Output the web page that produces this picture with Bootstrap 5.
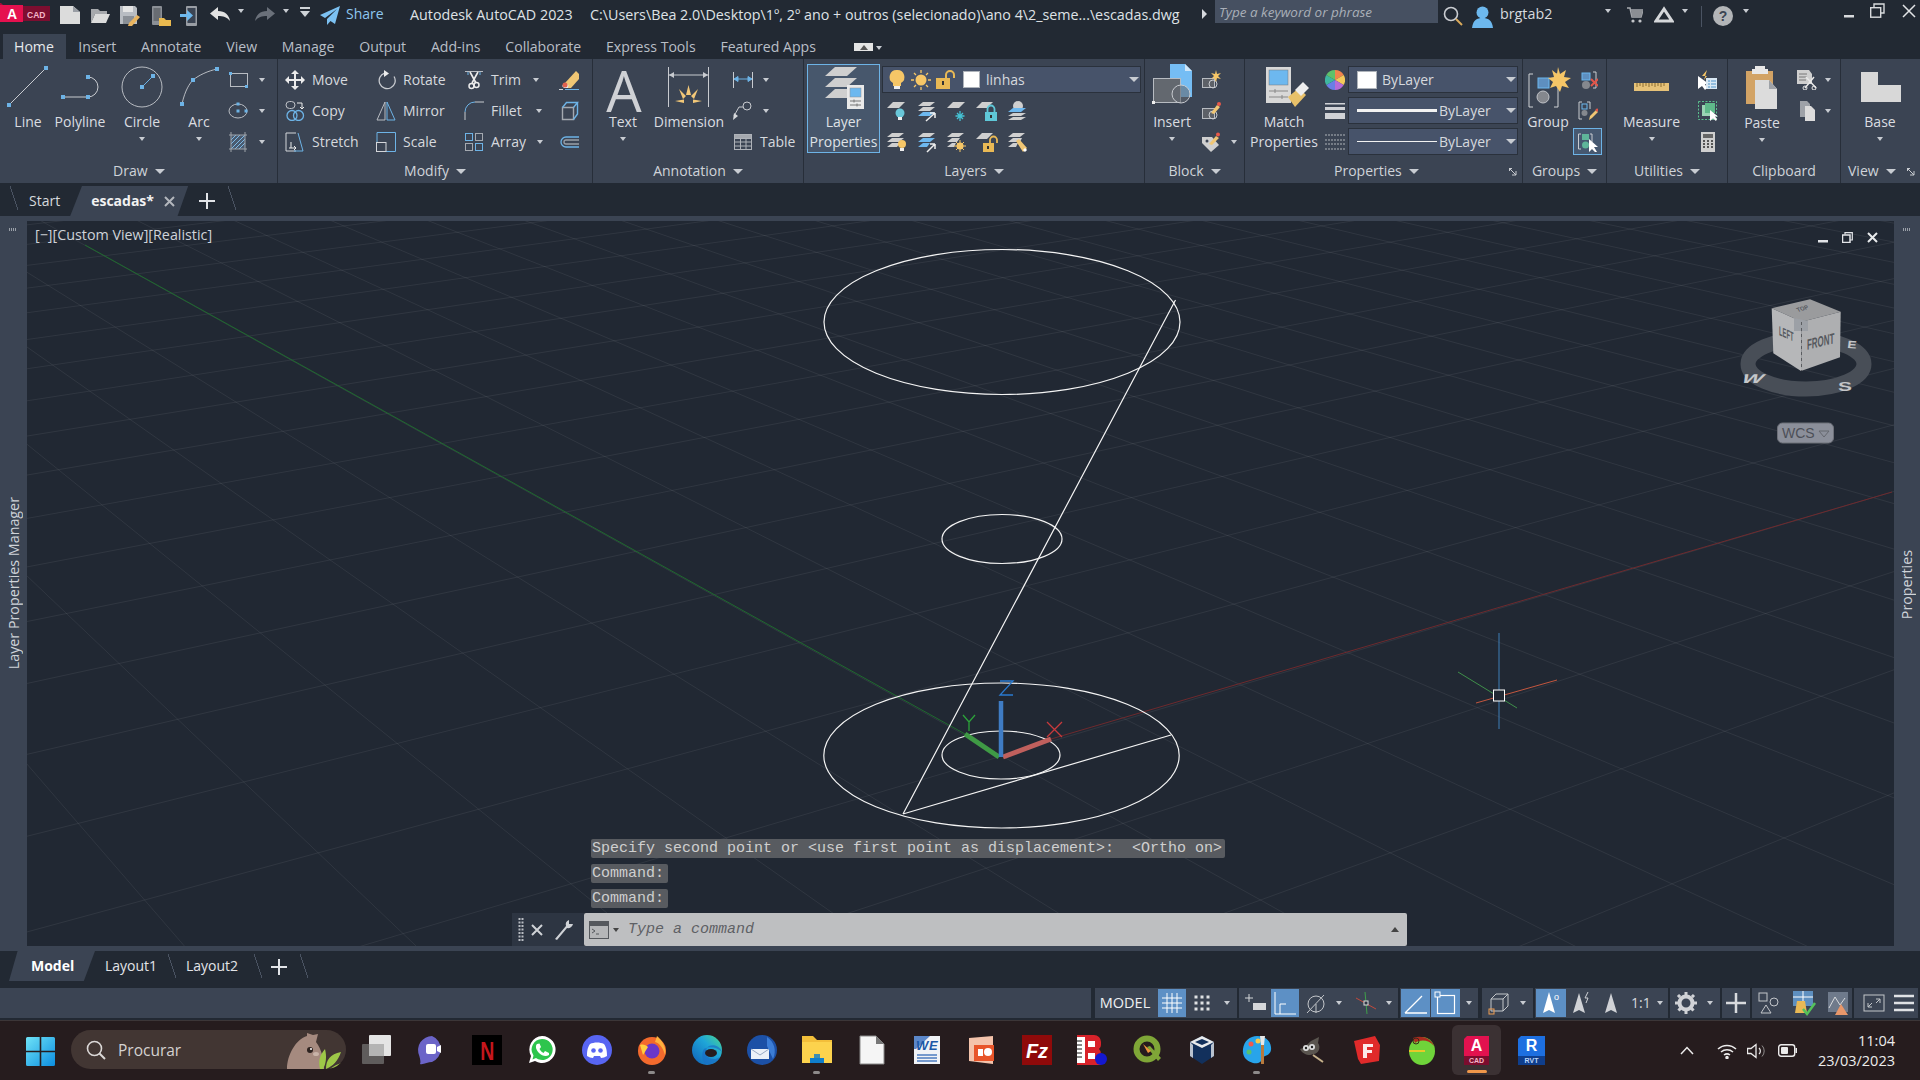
<!DOCTYPE html>
<html lang="en"><head><meta charset="utf-8"><title>AutoCAD</title>
<link href="https://cdn.jsdelivr.net/npm/bootstrap@5.3.0/dist/css/bootstrap.min.css" rel="stylesheet">
<style>
html,body{height:100%;overflow:hidden}
body{background:#222933;color:#d6d9de;font-family:"Open Sans","Liberation Sans",sans-serif;font-size:14px;line-height:20px}
svg{display:block;flex:none}
.root{width:1920px;height:1080px}
.cd{display:block;flex:none;width:0;height:0;border-top:4px solid #c8ccd2;border-left:3px solid transparent;border-right:3px solid transparent}
.cdl{display:inline-block;width:0;height:0;border-top:5px solid #c8ccd2;border-left:5px solid transparent;border-right:5px solid transparent;margin-left:7px;vertical-align:2px}
.cr{display:block;flex:none;width:0;height:0;border-left:5px solid #d6d9de;border-top:5px solid transparent;border-bottom:5px solid transparent}
.g1{margin-left:1px}.g2{margin-left:2px}.g3{margin-left:3px}.g4{margin-left:4px}.g5{margin-left:5px}.g6{margin-left:6px}.g7{margin-left:7px}.g8{margin-left:8px}.g9{margin-left:9px}.g10{margin-left:10px}.g11{margin-left:11px}.g12{margin-left:12px}.g13{margin-left:13px}.g14{margin-left:14px}.g16{margin-left:16px}.g23{margin-left:23px}.g26{margin-left:26px}
/* title */
.tbar{height:34px;padding-top:3px;align-items:flex-start}
.tbar>*{margin-top:3px}
.share{width:64px;color:#8ec6ef;margin-top:1px}
.app{width:180px;margin-top:2px;color:#dfe2e6;font-size:14.3px}
.pth{width:612px;margin-top:2px;color:#dfe2e6;white-space:nowrap;font-size:14.3px}
.tt{margin-top:6px!important}
.srch{width:223px;height:23px;margin-top:-3px!important;background:#465061;color:#a9afb8;font-style:italic;font-size:13.5px;padding:2px 4px}
.usr{width:105px;margin-top:1px;color:#d6d9de;font-size:14.3px}
.tsep{width:1px;height:21px;background:#4a5362}
/* ribbon tabs */
.rtabs{height:25px;padding-left:3px}
.rtab{padding:0 12.4px;line-height:25px;color:#b9bfc7;font-size:14.1px}
.rtab-on{background:#3b4453;color:#e8eaed;padding:0 12px 0 11px}
.colps{width:19px;height:8px;background:#e4e4e4;margin:9px 0 0 26px}
.rcar{margin:12px 0 0 3px}
/* ribbon */
.ribbon{height:124px;background:#3b4453}
.rp{border-right:1px solid #272e39;flex:none}
.rb{height:101px;padding-top:5px}
.rt{height:23px;line-height:22px;text-align:center;color:#cfd3d9;flex:none}
.p1{width:278px}.p2{width:315px}.p3{width:211px}.p4{width:341px}.p5{width:100px}.p6{width:278px}.p7{width:84px}.p8{width:121px}.p9{width:113px}.p10{width:79px;border-right:0}
.lg{display:flex;flex-direction:column;align-items:center;flex:none;line-height:20px;white-space:nowrap;text-align:center;color:#dadde1}
.lg .cd{margin-top:5px}
.w46{width:46px}.w48{width:48px}.w50{width:50px}.w54{width:54px}.w56{width:56px}.w60{width:60px}.w68{width:68px}.w72{width:72px}.w74{width:74px}.w78{width:78px}.w89{width:89px}
.sm{display:flex;flex-direction:column;flex:none}
.sr{display:flex;align-items:center;height:31px;white-space:nowrap;color:#d6d9de}
.mgrid{display:grid;grid-template-columns:91px 88px 95px 20px;grid-auto-rows:31px;align-content:start;padding-left:7px}
.lp{width:73px;height:89px;border:1px solid #6db3e6;background:#47576c;color:#dfe2e6}
.lp div{line-height:20px;margin-top:0}
.dd{display:flex;align-items:center;height:27px;margin:2px 0;background:#47536a;border:1px solid #2a313c;padding-left:5px;position:relative}
.dd-l{width:259px}.dd-p{width:170px}
.dd .cdb{margin-left:auto;margin-right:1px;border-top:5px solid #c8ccd2;border-left:5px solid transparent;border-right:5px solid transparent;width:0;height:0}
.sq{width:17px;height:17px;background:#fff;border:1px solid #aeb3ba}
.sq2{width:20px;height:18px;background:#fff;border:1px solid #aeb3ba}
.ln1{width:80px;height:3px;background:#f2f2f2}.ln2{width:80px;height:1px;background:#f2f2f2}
.icr{display:flex;height:31px;align-items:center}
.i30{width:30px;display:flex;justify-content:center}
.sel{background:#465870;border:1px solid #6db3e6;width:29px;height:27px;margin:2px 0;display:flex;align-items:center;justify-content:center}
.w29{width:29px;display:flex;justify-content:center}
.ttl-p{padding-left:89px;padding-right:5px}.ttl-v{padding-left:7px;padding-right:5px}.ttl-d{padding-left:113px;text-align:left}
.crn{margin-left:auto;align-self:center}
/* doc tabs */
.dtabs{height:33px;flex:none;padding-top:3px}
.sl{width:8px;height:24px;flex:none;background:linear-gradient(to top right,transparent 46%,#4a5362 46%,#4a5362 54%,transparent 54%)}
.dtab{color:#d6d9de}
.dact{width:118px;height:30px;background:#3b4453;clip-path:polygon(10% 0,100% 0,91% 100%,0 100%);padding-left:21px;color:#f2f2f2;font-weight:700;align-items:center}
.strip{height:5px;background:#3b4453;flex:none}
.main{height:725px;flex:none}
.pal{width:27px;background:#3b4453;flex:none;position:relative}
.pal2{width:26px}
.vert{writing-mode:vertical-rl;transform:rotate(180deg);color:#cfd3d9;white-space:nowrap;font-size:14.3px}
.pal-t1{height:266px}
.pal-t2{height:319px}
.grip{width:8px;height:3px;margin:7px 0 0 9px;background:repeating-linear-gradient(90deg,#9aa0a8 0 1px,transparent 1px 2px)}
.vp{width:1867px;background:#212833;position:relative;overflow:hidden;flex:none}
.vlab{position:absolute;left:8px;top:4px;color:#cfd3d9;font-size:14.3px;white-space:nowrap}
.wctl{position:absolute;right:16px;top:11px;display:flex;gap:14px;align-items:flex-end}
.hist{position:absolute;left:564px;font:15px/19px "Liberation Mono",monospace;background:#585b60;color:#cfcfcf;white-space:pre;padding:0 1px;border-radius:2px}
.h1{top:618px;width:634px}.h2{top:643px;width:77px}.h3{top:668px;width:77px}
.cmdh{position:absolute;left:485px;top:692px;width:72px;height:33px;background:#2d3542;gap:6px;padding-left:6px}
.cmdi{position:absolute;left:557px;top:692px;width:823px;height:33px;background:#bebfc1;border-radius:2px;padding:0 8px 0 5px;color:#5e6165;font:italic 15px "Liberation Mono",monospace}
.cmdi .cd{border-top-color:#444}
.cmdi .cu{margin-left:auto;width:0;height:0;border-bottom:5px solid #444;border-left:4px solid transparent;border-right:4px solid transparent}
/* layout tabs */
.ltabs{height:37px;flex:none}
.lact{width:86px;height:30px;margin-left:9px;background:#3b4453;clip-path:polygon(10% 0,100% 0,87% 100%,0 100%);padding-left:22px;color:#fff;font-weight:700;line-height:30px}
.ltxt{line-height:30px;color:#e2e4e8}
.l1{width:63px;margin-left:10px}.l2{width:64px;margin-left:10px}
.sl2{height:24px;margin-top:3px}
/* status */
.sbar{height:30px;flex:none}
.sleft{width:1091px;background:#3b4453;margin-right:4px}
.sg{background:#3b4453;display:flex;align-items:center;height:30px;flex:none;margin-right:2px}
.sc{display:flex;align-items:center;justify-content:center;height:28px;flex:none}
.on{background:#5d90c5}
.mdl{width:60px;font-size:14.5px;color:#eef0f2}
.cc{display:flex;justify-content:center;flex:none}
.c16{width:16px}.c17{width:17px}.c18{width:18px}.c19{width:19px}.c20{width:20px}.c21{width:21px}
.gapb{height:2px;flex:none}
/* taskbar */
.tbk{height:60px;background:#261c1e;flex:none;border-top:1px solid #3c3638}
.pill{width:275px;height:39px;background:#423633;border-radius:20px;padding-left:15px;margin-top:9px;color:#d5d2d1;font-size:15.5px;position:relative;overflow:hidden}
.pilltxt{margin-left:12px}
.tk{width:55px;display:flex;flex-direction:column;align-items:center;padding-top:14px;flex:none}
.tka{width:49px;height:50px;margin:4px 3px 0;background:#3b3133;border-radius:6px;padding-top:10px;display:flex;flex-direction:column;align-items:center;flex:none}
.pip{width:7px;height:3px;border-radius:2px;background:#8d8a8a;margin-top:6px}
.pipa{width:20px;height:3px;border-radius:2px;background:#f0974a;margin-top:5px}
.clock{width:120px;padding-right:25px;text-align:right;color:#ecebeb;font-size:14.5px;line-height:20px}
.ovis{overflow:visible}
</style></head>
<body>
<div class="root d-flex flex-column">

<!-- title bar -->
<div class="tbar d-flex flex-none">
 <svg width="50" height="20" viewBox="0 0 50 20" class="mt-0"><rect x="0" y="2" width="23" height="17" fill="#e5114f"/><path d="M0 2h3L1 0H0z" fill="#a30c3a"/><rect x="23" y="3" width="27" height="15" fill="#7d0e30"/><text x="7" y="16" font-family="Liberation Sans" font-weight="700" font-size="14" fill="#fff">A</text><text x="27" y="14.5" font-family="Liberation Sans" font-weight="700" font-size="8.5" fill="#f5b8c9">CAD</text></svg>
 <svg class="g10" width="20" height="18" viewBox="0 0 20 18"><path d="M0 0H13L20 6V18H0Z" fill="#dcdcdc"/><path d="M13 0V6H20Z" fill="#9a9ea5"/></svg>
 <svg class="g10" width="20" height="18" viewBox="0 0 20 18"><path d="M1 3H8L10 5H17V8H5L1 17Z" fill="#a7a9ad"/><path d="M5 8H20L16 17H1Z" fill="#dcdcdc"/></svg>
 <svg class="g10" width="20" height="20" viewBox="0 0 20 20"><path d="M0 0H15L17 2V18H0Z" fill="#b8bcc2"/><rect x="3" y="0" width="10" height="6" fill="#e4e4e4"/><rect x="3" y="10" width="11" height="8" fill="#8a8f96"/><path d="M9 17L17 9L20 11L12 20L8 20Z" fill="#e9b45f"/></svg>
 <svg class="g11" width="20" height="20" viewBox="0 0 20 20"><rect x="1" y="0" width="10" height="19" rx="1" fill="#8b8f96"/><rect x="2.5" y="2" width="7" height="13" fill="#686c72"/><path d="M8 12H13L15 14H20V20H8Z" fill="#e9b94f"/></svg>
 <svg class="g9" width="20" height="20" viewBox="0 0 20 20"><rect x="6" y="0" width="11" height="20" rx="1" fill="#9a9ea5"/><rect x="7.5" y="2" width="8" height="15" fill="#3b4453"/><path d="M0 8H7V4L13 9.5L7 15V11H0Z" fill="#6db8ee"/></svg>
 <svg class="g10" width="20" height="16" viewBox="0 0 20 16"><path d="M8 1V5C15 5 19 9 20 15C17 11 13 10 8 10V14L0 7.5Z" fill="#e2e2e2"/></svg>
 <span class="cd g8 tt"></span>
 <svg class="g11" width="20" height="16" viewBox="0 0 20 16"><path d="M12 1V5C5 5 1 9 0 15C3 11 7 10 12 10V14L20 7.5Z" fill="#6a707a"/></svg>
 <span class="cd g8 tt"></span>
 <svg class="g11" width="10" height="12" viewBox="0 0 10 12"><rect width="10" height="2" y="1" fill="#cfd3d8"/><path d="M0 5H10L5 11Z" fill="#cfd3d8"/></svg>
 <svg class="g10" width="20" height="20" viewBox="0 0 20 20"><path d="M20 0L0 9L5 12L17 3L7 13V19L10.5 15L15 18Z" fill="#7cc1f2"/></svg>
 <span class="share g6">Share</span>
 <span class="app">Autodesk AutoCAD 2023</span>
 <span class="pth">C:\Users\Bea 2.0\Desktop\1º, 2º ano + outros (selecionado)\ano 4\2_seme...\escadas.dwg</span>
 <span class="cr tt"></span>
 <div class="srch g8">Type a keyword or phrase</div>
 <svg class="g5" width="20" height="20" viewBox="0 0 20 20"><circle cx="8" cy="8" r="6.5" fill="none" stroke="#c9ccd1" stroke-width="1.6"/><path d="M13 13L19 19" stroke="#d9a95c" stroke-width="2"/></svg>
 <svg class="g9" width="21" height="22" viewBox="0 0 21 22"><circle cx="10.5" cy="6.5" r="6" fill="#6db8ee"/><path d="M0 22C1 14 5 12 10.500 12S20 14 21 22Z" fill="#6db8ee"/></svg>
 <span class="usr g7">brgtab2</span>
 <span class="cd tt"></span>
 <svg class="g16" width="16" height="18" viewBox="0 0 16 18"><path d="M0 2H3L5 11H14L16 4H4" fill="none" stroke="#a8abb0" stroke-width="1.5"/><path d="M4 4H16L14 11H5Z" fill="#8b8e93"/><circle cx="6" cy="15" r="1.6" fill="#c3c5c9"/><circle cx="13" cy="15" r="1.6" fill="#c3c5c9"/></svg>
 <svg class="g11" width="20" height="18" viewBox="0 0 20 18"><path d="M10 3L2 15H18Z" fill="none" stroke="#d5d7da" stroke-width="3"/></svg>
 <span class="cd g8 tt"></span>
 <span class="tsep g13"></span>
 <svg class="g11" width="20" height="20" viewBox="0 0 20 20"><circle cx="10" cy="10" r="10" fill="#b3b5b8"/><text x="10" y="15" text-anchor="middle" font-family="Liberation Sans" font-weight="700" font-size="14" fill="#3b4453">?</text></svg>
 <span class="cd g10 tt"></span>
 <div class="d-flex ms-auto align-items-center mt-0 pe-1 gap-3">
  <svg width="10" height="14" viewBox="0 0 10 14"><rect y="11" width="10" height="2.500" fill="#d8dadd"/></svg>
  <svg width="15" height="15" viewBox="0 0 15 15"><rect x="0.700" y="4.700" width="10" height="9.500" fill="none" stroke="#d8dadd" stroke-width="1.400"/><path d="M4 4V1H14V10H11" fill="none" stroke="#d8dadd" stroke-width="1.400"/></svg>
  <svg class="g1" width="14" height="14" viewBox="0 0 14 14"><path d="M1 1L13 13M13 1L1 13" stroke="#e2e4e6" stroke-width="1.500"/></svg>
 </div>
</div>

<!-- ribbon tabs -->
<div class="rtabs d-flex flex-none">
 <span class="rtab rtab-on">Home</span><span class="rtab">Insert</span><span class="rtab">Annotate</span><span class="rtab">View</span><span class="rtab">Manage</span><span class="rtab">Output</span><span class="rtab">Add-ins</span><span class="rtab">Collaborate</span><span class="rtab">Express Tools</span><span class="rtab">Featured Apps</span>
 <span class="colps d-flex justify-content-center align-items-center"><svg width="8" height="5" viewBox="0 0 8 5"><path d="M4 0L8 5H0Z" fill="#555"/></svg></span><span class="cd rcar"></span>
</div>

<!-- ribbon -->
<div class="ribbon d-flex flex-none">

 <!-- Draw -->
 <div class="rp p1 d-flex flex-column">
  <div class="rb d-flex ps-1">
   <div class="lg w48"><svg width="48" height="48" viewBox="0 0 48 48"><path d="M5 41L42 4" stroke="#c8cbd0" stroke-width="1"/><rect x="3" y="39" width="4" height="4" fill="#6db3e6"/><rect x="40" y="2" width="4" height="4" fill="#6db3e6"/></svg>Line</div>
   <div class="lg w56"><svg width="56" height="48" viewBox="0 0 56 48"><path d="M11 33H36A10 10 0 0 0 36 13" fill="none" stroke="#c8cbd0"/><rect x="9" y="31" width="4" height="4" fill="#6db3e6"/><rect x="34" y="31" width="4" height="4" fill="#6db3e6"/><rect x="34" y="11" width="4" height="4" fill="#6db3e6"/></svg>Polyline</div>
   <div class="lg w68"><svg width="68" height="48" viewBox="0 0 68 48"><circle cx="34" cy="23" r="20" fill="none" stroke="#b8bcc2"/><path d="M34 23L45 12" stroke="#6db3e6"/><rect x="32" y="21" width="4" height="4" fill="#6db3e6"/><rect x="43" y="10" width="4" height="4" fill="#6db3e6"/></svg>Circle<span class="cd"></span></div>
   <div class="lg w46"><svg width="46" height="48" viewBox="0 0 46 48"><path d="M6 40C9 26 14 19 17 16C23 11 32 7 41 5" fill="none" stroke="#b8bcc2"/><rect x="4" y="38" width="4" height="4" fill="#6db3e6"/><rect x="15" y="14" width="4" height="4" fill="#6db3e6"/><rect x="39" y="3" width="4" height="4" fill="#6db3e6"/></svg>Arc<span class="cd"></span></div>
   <div class="sm g6">
    <div class="sr"><svg width="20" height="20" viewBox="0 0 20 20"><rect x="2.500" y="3.500" width="17" height="13" fill="none" stroke="#b8bcc2"/><rect x="1" y="2" width="3" height="3" fill="#6db3e6"/><rect x="17" y="15" width="3" height="3" fill="#6db3e6"/></svg><span class="cd g11"></span></div>
    <div class="sr"><svg width="20" height="20" viewBox="0 0 20 20"><ellipse cx="10" cy="10" rx="9" ry="7" fill="none" stroke="#b8bcc2"/><rect x="8.500" y="8.500" width="3" height="3" fill="#6db3e6"/><rect x="8.500" y="1.500" width="3" height="3" fill="#6db3e6"/><rect x="16.500" y="8.500" width="3" height="3" fill="#6db3e6"/></svg><span class="cd g11"></span></div>
    <div class="sr"><svg width="20" height="20" viewBox="0 0 20 20"><rect x="3" y="3" width="14" height="14" fill="#4a5b70"/><path d="M3 8L8 3M3 12L12 3M3 17L17 3M7 17L17 7M11 17L17 11" stroke="#7db9e6"/><path d="M1 3H19M1 17H19M3 0V20M17 0V20" stroke="#9ea3aa"/></svg><span class="cd g11"></span></div>
   </div>
  </div>
  <div class="rt ttl-d">Draw<span class="cdl"></span></div>
 </div>

 <!-- Modify -->
 <div class="rp p2 d-flex flex-column">
  <div class="rb mgrid">
   <div class="sr"><svg width="20" height="20" viewBox="0 0 20 20"><path d="M10 0l4 4h-3v5h5V6l4 4-4 4v-3h-5v5h3l-4 4-4-4h3v-5H4v3L0 10l4-4v3h5V4H6z" fill="#ececec"/></svg><span class="g7">Move</span></div>
   <div class="sr"><svg width="20" height="20" viewBox="0 0 20 20"><path d="M6 4A8 8 0 1 0 16 4" transform="rotate(20 10 11)" fill="none" stroke="#c8cbd0" stroke-width="1.300"/><path d="M8 0L13 3.500L8 7Z" fill="#ececec"/></svg><span class="g7">Rotate</span></div>
   <div class="sr"><svg width="20" height="20" viewBox="0 0 20 20"><path d="M1 1.500H19" stroke="#b8bcc2"/><path d="M4 2V5M16 2V5" stroke="#6db3e6"/><path d="M6 2L12 13M14 2L8 13" stroke="#ececec" stroke-width="1.600"/><circle cx="7.500" cy="16" r="2.500" fill="none" stroke="#ececec" stroke-width="1.500"/><circle cx="12.500" cy="15" r="2.500" fill="none" stroke="#ececec" stroke-width="1.500"/></svg><span class="g7">Trim</span><span class="cd g12"></span></div>
   <div class="sr"><svg width="20" height="20" viewBox="0 0 20 20"><path d="M6 13L17 1L20 4V9L12 18H8Z" fill="#f0c674"/><path d="M6 13L3 16L5 18L9 18L9.500 15Z" fill="#e8e8e8"/><circle cx="6" cy="15" r="2.500" fill="#e0624f"/><path d="M0 19.500H4" stroke="#d0d3d7"/><path d="M6 19.500H20" stroke="#6db3e6"/></svg></div>

   <div class="sr"><svg width="20" height="20" viewBox="0 0 20 20"><rect x="1" y="0.500" width="9" height="7" rx="3.500" fill="none" stroke="#c0c3c8"/><path d="M12 2H17V7M15 6L17 8L19 6" fill="none" stroke="#ececec"/><circle cx="7" cy="14.500" r="5" fill="none" stroke="#6db3e6" stroke-width="1.300"/><circle cx="13.500" cy="14.500" r="5" fill="none" stroke="#6db3e6" stroke-width="1.300"/></svg><span class="g7">Copy</span></div>
   <div class="sr"><svg width="20" height="20" viewBox="0 0 20 20"><path d="M9 1L1 19H9Z" fill="none" stroke="#b8bcc2"/><path d="M11 1L19 19H11Z" fill="none" stroke="#6db3e6"/></svg><span class="g7">Mirror</span></div>
   <div class="sr"><svg width="20" height="20" viewBox="0 0 20 20"><path d="M1 19V11" stroke="#c8cbd0"/><path d="M1 11A10 10 0 0 1 11 1" fill="none" stroke="#6db3e6"/><path d="M11 1H20" stroke="#c8cbd0"/></svg><span class="g7">Fillet</span><span class="cd g14"></span></div>
   <div class="sr"><svg width="20" height="20" viewBox="0 0 20 20"><path d="M3.500 6.500H14.500V18.500H3.500Z" fill="none" stroke="#a4a9b0" stroke-width="1.400"/><path d="M3.500 6.500L7.500 1.500H18.500L14.500 6.500M18.500 1.500V13L14.500 18.500" fill="none" stroke="#6db3e6" stroke-width="1.400"/></svg></div>

   <div class="sr"><svg width="20" height="20" viewBox="0 0 20 20"><path d="M11 1H1V19H11" fill="none" stroke="#d4d6da"/><path d="M13 1L18 19H9" fill="none" stroke="#6db3e6"/><path d="M4 16H11M9 14L11 16L9 18M6 10V16" fill="none" stroke="#ececec"/></svg><span class="g7">Stretch</span></div>
   <div class="sr"><svg width="20" height="20" viewBox="0 0 20 20"><path d="M1 10V0.500H19.500V19.500H10" fill="none" stroke="#6db3e6"/><rect x="0.500" y="10.500" width="9.500" height="9" fill="none" stroke="#d4d6da"/></svg><span class="g7">Scale</span></div>
   <div class="sr"><svg width="20" height="20" viewBox="0 0 20 20" fill="none"><rect x="1.500" y="1.500" width="7" height="7" stroke="#6db3e6"/><rect x="11.500" y="1.500" width="7" height="7" stroke="#a4a9b0"/><rect x="1.500" y="11.500" width="7" height="7" stroke="#a4a9b0"/><rect x="11.500" y="11.500" width="7" height="7" stroke="#6db3e6"/></svg><span class="g7">Array</span><span class="cd g11"></span></div>
   <div class="sr"><svg width="20" height="20" viewBox="0 0 20 20" fill="none"><path d="M20 5H7A5 5 0 0 0 7 15H20" stroke="#6db3e6" stroke-width="1.300"/><path d="M20 8H7A2 2 0 0 0 7 12H20" stroke="#9aa0a8" stroke-width="1.300"/></svg></div>
  </div>
  <div class="rt">Modify<span class="cdl"></span></div>
 </div>

 <!-- Annotation -->
 <div class="rp p3 d-flex flex-column">
  <div class="rb d-flex">
   <div class="lg w60"><svg class="ovis" width="60" height="48" viewBox="0 0 60 48"><text x="31" y="48" text-anchor="middle" font-family="Open Sans" font-size="56" fill="#cfd1d5">A</text></svg>Text<span class="cd"></span></div>
   <div class="lg w72"><svg width="72" height="48" viewBox="0 0 72 48"><path d="M15.500 3V43M55.500 3V43M16 11H55" stroke="#c8cbd0" fill="none"/><path d="M16 11L21 8V14ZM55 11L50 8V14Z" fill="#c8cbd0"/><path d="M35.500 21L38 31H33ZM26 25L33 32L30 35ZM45 25L38 32L41 35ZM22 37L31 35.500L31 39ZM49 37L40 35.500L40 39Z" fill="#f3c878"/></svg>Dimension</div>
   <div class="sm g8">
    <div class="sr"><svg width="20" height="20" viewBox="0 0 20 20"><path d="M0.500 2V18M19.500 2V18" stroke="#c8cbd0"/><path d="M1 9H19M1 9L5 6.500V11.500ZM19 9L15 6.500V11.500Z" stroke="#6db3e6" fill="#6db3e6"/></svg><span class="cd g10"></span></div>
    <div class="sr"><svg width="20" height="20" viewBox="0 0 20 20" fill="none"><circle cx="14" cy="5" r="4" stroke="#c8cbd0"/><path d="M10 6H6L1 15" stroke="#c8cbd0"/><path d="M0 19L1 12L5 15Z" fill="#d8dadd"/></svg><span class="cd g10"></span></div>
    <div class="sr"><svg width="20" height="20" viewBox="0 0 20 20" fill="none" stroke="#aeb2b8"><rect x="1.500" y="2.500" width="17" height="15"/><path d="M1.500 6.500H18.500M1.500 10H18.500M1.500 14H18.500M7.500 6.500V17.500M13 6.500V17.500"/><rect x="1.500" y="2.500" width="17" height="4" fill="#a4a8ae"/></svg><span class="g7">Table</span></div>
   </div>
  </div>
  <div class="rt">Annotation<span class="cdl"></span></div>
 </div>

 <!-- Layers -->
 <div class="rp p4 d-flex flex-column">
  <div class="rb d-flex">
   <div class="lg lp g3"><svg width="71" height="47" viewBox="0 0 71 47"><path d="M27 2H49L39 11H17Z" fill="#cfcfcf"/><path d="M27 13H49L39 22H17Z" fill="#cfcfcf"/><path d="M27 24H44L39 33H17Z" fill="#cfcfcf"/><rect x="39" y="20" width="17" height="24" fill="#e9e9e9"/><rect x="42" y="23" width="11" height="9" fill="#6db8ef" stroke="#8d9197" stroke-width=".5"/><path d="M42 36H53M42 40H53M46 34.500V37.500M49 38.500V41.500" stroke="#777"/></svg><div>Layer</div><div>Properties</div></div>
   <div class="sm g2">
    <div class="dd dd-l">
     <svg width="18" height="22" viewBox="0 0 18 22"><path d="M9 1A7 7 0 0 1 13 14V17H5V14A7 7 0 0 1 9 1Z" fill="#f6c667"/><rect x="6" y="17" width="6" height="3" fill="#eee"/></svg>
     <svg class="g5" width="20" height="20" viewBox="0 0 20 20"><circle cx="10" cy="10" r="5.500" fill="#f6c667"/><path d="M10 0V3M10 17V20M0 10H3M17 10H20M3 3L5 5M15 15L17 17M17 3L15 5M5 15L3 17" stroke="#f6c667" stroke-width="1.300"/></svg>
     <svg class="g5" width="20" height="20" viewBox="0 0 20 20"><rect x="0" y="8" width="14" height="11" fill="#e9b955"/><rect x="6" y="11" width="2" height="4" fill="#333"/><path d="M10 8V5A4 4 0 0 1 18 5V8" fill="none" stroke="#e9b955" stroke-width="2"/></svg>
     <span class="sq g7"></span><span class="g6">linhas</span><span class="cdb"></span>
    </div>
    <div class="icr">
     <div class="i30"><svg width="22" height="22" viewBox="0 0 22 22"><path d="M7 2H19L13 8H1Z" fill="#cfcfcf"/><circle cx="14" cy="13" r="4.500" fill="#69c6d8"/><rect x="12" y="17" width="4" height="3" fill="#eee"/></svg></div>
     <div class="i30"><svg width="22" height="22" viewBox="0 0 22 22"><path d="M7 2H19L14 6H2Z" fill="#cfcfcf"/><path d="M7 7H19L14 11H2Z" fill="#cfcfcf"/><path d="M7 12H19L14 16H2Z" fill="#6db8ef"/><path d="M10 21L19 13M19 13V18M19 13H14" stroke="#eee" stroke-width="1.500" fill="none"/></svg></div>
     <div class="i30"><svg width="22" height="22" viewBox="0 0 22 22"><path d="M7 2H19L13 8H1Z" fill="#cfcfcf"/><path d="M14 11V21M9.500 16H18.500M11 13L17 19M17 13L11 19" stroke="#45c2d4" stroke-width="1.300"/></svg></div>
     <div class="i30"><svg width="22" height="22" viewBox="0 0 22 22"><path d="M6 2H17L11 8H0Z" fill="#cfcfcf"/><rect x="9" y="12" width="12" height="9" fill="#5fc8d8"/><rect x="14" y="15" width="2" height="3" fill="#333"/><path d="M11.500 12V9A3.500 3.500 0 0 1 18.500 9V12" fill="none" stroke="#5fc8d8" stroke-width="1.800"/></svg></div>
     <div class="i30"><svg width="22" height="22" viewBox="0 0 22 22"><circle cx="12" cy="6" r="5" fill="#cfcfcf"/><path d="M7 8H20L15 12H2Z" fill="#6db8ef"/><path d="M7 13H20L15 16H2Z" fill="#cfcfcf"/><path d="M7 17H20L15 20H2Z" fill="#cfcfcf"/></svg></div>
    </div>
    <div class="icr">
     <div class="i30"><svg width="22" height="22" viewBox="0 0 22 22"><path d="M6 2H18L13 6H1Z" fill="#cfcfcf"/><path d="M6 7H18L13 11H1Z" fill="#cfcfcf"/><path d="M6 12H14L11 16H1Z" fill="#cfcfcf"/><circle cx="16" cy="13" r="4" fill="#f6c667"/><rect x="14" y="17" width="4" height="3" fill="#eee"/></svg></div>
     <div class="i30"><svg width="22" height="22" viewBox="0 0 22 22"><path d="M7 2H19L14 6H2Z" fill="#cfcfcf"/><path d="M7 7H19L14 11H2Z" fill="#6db8ef"/><path d="M7 12H14L11 16H2Z" fill="#6db8ef"/><path d="M11 21L19 13M19 13V18M19 13H14" stroke="#eee" stroke-width="1.500" fill="none"/></svg></div>
     <div class="i30"><svg width="22" height="22" viewBox="0 0 22 22"><path d="M6 2H18L13 6H1Z" fill="#cfcfcf"/><path d="M6 7H14L11 11H1Z" fill="#cfcfcf"/><path d="M6 12H10L8 16H1Z" fill="#cfcfcf"/><circle cx="14" cy="15" r="3.500" fill="#f6c667"/><path d="M14 9V21M8 15H20M10 11L18 19M18 11L10 19" stroke="#f6c667"/></svg></div>
     <div class="i30"><svg width="22" height="22" viewBox="0 0 22 22"><path d="M6 2H17L11 8H0Z" fill="#cfcfcf"/><rect x="7" y="12" width="11" height="9" fill="#e9b955"/><rect x="11" y="15" width="2" height="3" fill="#333"/><path d="M14 12V9A3.500 3.500 0 0 1 21 9V12" fill="none" stroke="#e9b955" stroke-width="1.800"/></svg></div>
     <div class="i30"><svg width="22" height="22" viewBox="0 0 22 22"><path d="M7 2H19L14 6H2Z" fill="#cfcfcf"/><path d="M7 7H16L14 11H2Z" fill="#cfcfcf"/><path d="M7 12H12L10 16H2Z" fill="#cfcfcf"/><path d="M10 10L13 8L21 17L17 21Z" fill="#f0c674"/><path d="M18 18L20 20" stroke="#fff" stroke-width="3"/></svg></div>
    </div>
   </div>
  </div>
  <div class="rt">Layers<span class="cdl"></span></div>
 </div>

 <!-- Block -->
 <div class="rp p5 d-flex flex-column">
  <div class="rb d-flex">
   <div class="lg w54"><svg width="54" height="48" viewBox="0 0 54 48"><path d="M25 0H40L47 7V33H25Z" fill="#75bdf4"/><path d="M40 0V7H47Z" fill="#cfe6f8"/><rect x="8.500" y="14.500" width="27" height="24" fill="#63686f" stroke="#b7bbc1"/><circle cx="36" cy="30" r="9" fill="#63686f" fill-opacity=".6" stroke="#c8cbd0"/><rect x="7" y="37" width="3" height="3" fill="#eee"/></svg>Insert<span class="cd"></span></div>
   <div class="sm g2">
    <div class="sr"><svg width="20" height="20" viewBox="0 0 20 20"><rect x="1.500" y="8.500" width="12" height="9" fill="#5d6168" stroke="#b7bbc1"/><circle cx="12" cy="14" r="4" fill="none" stroke="#c8cbd0"/><path d="M15 0L16 4L20 3L17 6L20 9L16 8L15 12L13 8L10 9L13 6L10 3L14 4Z" fill="#f6c667"/></svg></div>
    <div class="sr"><svg width="20" height="20" viewBox="0 0 20 20"><rect x="1.500" y="7.500" width="12" height="10" fill="#5d6168" stroke="#b7bbc1"/><circle cx="12" cy="14" r="4" fill="none" stroke="#c8cbd0"/><path d="M10 12L16 4L19 6L13 13Z" fill="#f0c674"/><circle cx="18" cy="3" r="2" fill="#e8594a"/></svg></div>
    <div class="sr"><svg width="20" height="20" viewBox="0 0 20 20"><path d="M1 5H11L18 13L10 20L1 11Z" fill="#cfcfcf"/><circle cx="6" cy="9" r="1.500" fill="#3b4453"/><path d="M8 12L15 4L18 6L11 13Z" fill="#f0c674"/><circle cx="17" cy="2.500" r="2" fill="#e8594a"/></svg><span class="cd g10"></span></div>
   </div>
  </div>
  <div class="rt">Block<span class="cdl"></span></div>
 </div>

 <!-- Properties -->
 <div class="rp p6 d-flex flex-column">
  <div class="rb d-flex">
   <div class="lg w74 g2"><svg width="74" height="48" viewBox="0 0 74 48"><rect x="19" y="3" width="25" height="36" fill="#d8d8d8"/><rect x="22" y="6" width="19" height="15" fill="#6db8ef" stroke="#777" stroke-width=".5"/><path d="M22 27H41M22 33H41M28 25V29M35 31V35" stroke="#888"/><path d="M41 33L52 24L59 31L48 43Z" fill="#e8c16a"/><path d="M48 26L56 18L62 24L54 32Z" fill="#eee"/></svg><div>Match</div><div>Properties</div></div>
   <div class="sm g4">
    <div class="sr"><svg width="20" height="20" viewBox="0 0 20 20"><path d="M10 10V0A10 10 0 0 1 18.700 5Z" fill="#f0844c"/><path d="M10 10L18.700 5A10 10 0 0 1 18.700 15Z" fill="#f4c95a"/><path d="M10 10L18.700 15A10 10 0 0 1 10 20Z" fill="#b66bd8"/><path d="M10 10V20A10 10 0 0 1 1.300 15Z" fill="#6a7ee6"/><path d="M10 10L1.300 15A10 10 0 0 1 1.300 5Z" fill="#3fb6a0"/><path d="M10 10L1.300 5A10 10 0 0 1 10 0Z" fill="#5fc16a"/></svg></div>
    <div class="sr"><svg width="20" height="20" viewBox="0 0 20 20"><rect y="2" width="20" height="1.500" fill="#d0d2d6"/><rect y="6" width="20" height="3" fill="#d0d2d6"/><rect y="12" width="20" height="6" fill="#d0d2d6"/></svg></div>
    <div class="sr"><svg width="20" height="20" viewBox="0 0 20 20"><path d="M0 3H20M0 8H20M0 12H20M0 17H20" stroke="#b0b4ba" stroke-dasharray="2 1"/></svg></div>
   </div>
   <div class="sm g3">
    <div class="dd dd-p ps-2"><span class="sq2"></span><span class="g5">ByLayer</span><span class="cdb"></span></div>
    <div class="dd dd-p ps-2"><span class="ln1"></span><span class="g2">ByLayer</span><span class="cdb"></span></div>
    <div class="dd dd-p ps-2"><span class="ln2"></span><span class="g2">ByLayer</span><span class="cdb"></span></div>
   </div>
  </div>
  <div class="rt ttl-p d-flex"><span>Properties<span class="cdl"></span></span><svg class="crn" width="8" height="8" viewBox="0 0 8 8"><path d="M0 0.500H3M0.500 0V3M1 1L7 7M7 3V7H3" stroke="#c8cbd0" fill="none"/></svg></div>
 </div>

 <!-- Groups -->
 <div class="rp p7 d-flex flex-column">
  <div class="rb d-flex">
   <div class="lg w50"><svg width="50" height="48" viewBox="0 0 50 48"><path d="M10 10H6V43H10M31 10H35V43H31" fill="none" stroke="#d0d2d6"/><rect x="15" y="14" width="11" height="10" fill="#5e8fbf" stroke="#6db8ef"/><circle cx="20" cy="33" r="6" fill="#85888e" stroke="#c0c3c8"/><path d="M35 3L37 10L43 6L41 13L48 14L42 18L46 24L39 22L37 28L33 22L27 24L30 18L25 14L31 13L29 6L34 10Z" fill="#f6c667"/></svg>Group</div>
   <div class="sm">
    <div class="w29 sr"><svg width="20" height="20" viewBox="0 0 20 20"><path d="M15 2H18V18H15" fill="none" stroke="#c8cbd0"/><rect x="4" y="3" width="8" height="7" fill="#5e8fbf" stroke="#6db8ef"/><circle cx="8" cy="15" r="4" fill="#85888e"/><path d="M13 9L20 16M20 9L13 16" stroke="#e0564a" stroke-width="2"/></svg></div>
    <div class="w29 sr"><svg width="20" height="20" viewBox="0 0 20 20"><path d="M4 1H1V18H4M9 1H12V8" fill="none" stroke="#c8cbd0"/><rect x="4" y="3" width="5" height="5" fill="none" stroke="#6db8ef"/><circle cx="6.500" cy="12" r="3" fill="#85888e"/><path d="M11 19L12 15L18 9L20 11L14 17Z" fill="#f0c674"/><circle cx="19" cy="9" r="1.500" fill="#e0564a"/></svg></div>
    <div class="sel"><svg width="20" height="20" viewBox="0 0 20 20"><path d="M3 2H0.500V17H3M12 2H14V10" fill="none" stroke="#c8cbd0"/><rect x="4" y="2" width="7" height="6" fill="#5fb59a"/><circle cx="7.500" cy="13" r="3.500" fill="#5fb59a"/><path d="M11 7V20L14 17L17 20H19L16 15H20Z" fill="#fff"/></svg></div>
   </div>
  </div>
  <div class="rt">Groups<span class="cdl"></span></div>
 </div>

 <!-- Utilities -->
 <div class="rp p8 d-flex flex-column">
  <div class="rb d-flex">
   <div class="lg w89"><svg width="89" height="48" viewBox="0 0 89 48"><rect x="27" y="19" width="35" height="8" fill="#e6c278"/><path d="M30 19V23M33 19V22M36 19V23M39 19V22M42 19V23M45 19V22M48 19V23M51 19V22M54 19V23M57 19V22" stroke="#8a6d30"/></svg>Measure<span class="cd"></span></div>
   <div class="sm g2">
    <div class="sr"><svg width="20" height="20" viewBox="0 0 20 20"><path d="M9 0L4 6H9L6 10Z" fill="#f6c667"/><path d="M0 6V19L4 16L7 20L9 18L7 14H11Z" fill="#fff"/><rect x="8" y="8" width="11" height="11" fill="#d9e8f3"/><path d="M10 11H12M13 11H18M10 14H12M13 14H18M10 17H12M13 17H18" stroke="#4f93c8"/></svg></div>
    <div class="sr"><svg width="20" height="20" viewBox="0 0 20 20"><rect x="0.500" y="0.500" width="18" height="18" fill="none" stroke="#5bc08e" stroke-dasharray="2 1.500"/><rect x="4" y="4" width="12" height="11" fill="#9ad4b4"/><rect x="7" y="2" width="10" height="10" fill="#5fb98a"/><path d="M12 9V20L15 17.500L18 20L19 18L17 15.500H20Z" fill="#fff"/></svg></div>
    <div class="sr"><svg width="20" height="20" viewBox="0 0 20 20"><rect x="3" y="0" width="14" height="20" fill="#cfcfcf"/><rect x="5" y="2" width="10" height="4" fill="#666"/><path d="M5 9H7M9 9H11M13 9H15M5 12H7M9 12H11M13 12H15M5 15H7M9 15H11M13 15H15" stroke="#555" stroke-width="2"/></svg></div>
   </div>
  </div>
  <div class="rt">Utilities<span class="cdl"></span></div>
 </div>

 <!-- Clipboard -->
 <div class="rp p9 d-flex flex-column">
  <div class="rb d-flex">
   <div class="lg w68"><svg width="68" height="49" viewBox="0 0 68 49"><rect x="18" y="7" width="27" height="33" fill="#d2a365"/><path d="M27 5H37V2H27ZM24 5H40V10H24Z" fill="#e8e8e8"/><path d="M27 16H41L49 25V45H27Z" fill="#dcdcdc"/><path d="M41 16V25H49Z" fill="#9ea2a8"/></svg>Paste<span class="cd"></span></div>
   <div class="sm g1">
    <div class="sr"><svg width="20" height="20" viewBox="0 0 20 20"><path d="M0 0H12L15 4V14H0Z" fill="#cfcfcf"/><path d="M2 4H10M2 7H10M2 10H9" stroke="#777"/><path d="M9 7L19 18M17 7L8 18" stroke="#e8e8e8" stroke-width="1.500"/><circle cx="8" cy="18" r="2" fill="none" stroke="#e8e8e8"/><circle cx="17" cy="18" r="2" fill="none" stroke="#e8e8e8"/></svg><span class="cd g8"></span></div>
    <div class="sr"><svg width="20" height="20" viewBox="0 0 20 20"><path d="M3 0H10L13 3V5H8V16H3Z" fill="#9ea2a8"/><path d="M8 5H14L18 9V20H8Z" fill="#dcdcdc"/></svg><span class="cd g8"></span></div>
   </div>
  </div>
  <div class="rt">Clipboard</div>
 </div>

 <!-- View -->
 <div class="rp p10 d-flex flex-column">
  <div class="rb d-flex">
   <div class="lg w78"><svg width="78" height="48" viewBox="0 0 78 48"><path d="M20 8H37V21H60V38H20Z" fill="#d8d8d8"/></svg>Base<span class="cd"></span></div>
  </div>
  <div class="rt ttl-v d-flex"><span>View<span class="cdl"></span></span><svg class="crn" width="8" height="8" viewBox="0 0 8 8"><path d="M0 0.500H3M0.500 0V3M1 1L7 7M7 3V7H3" stroke="#c8cbd0" fill="none"/></svg></div>
 </div>
</div>

<!-- doc tabs -->
<div class="dtabs d-flex">
 <span class="sl g10"></span><span class="dtab g11 align-self-center">Start</span>
 <div class="dact d-flex g10">escadas*<svg class="g10" width="11" height="11" viewBox="0 0 11 11"><path d="M1 1L10 10M10 1L1 10" stroke="#b3b7bd" stroke-width="2"/></svg></div>
 <svg class="g11 align-self-center" width="16" height="16" viewBox="0 0 16 16"><path d="M8 0V16M0 8H16" stroke="#e2e4e8" stroke-width="2"/></svg>
 <span class="sl g13"></span>
</div>
<div class="strip"></div>

<!-- main -->
<div class="main d-flex">
 <div class="pal"><div class="grip"></div><div class="pal-t1"></div><div class="d-flex justify-content-center"><span class="vert">Layer Properties Manager</span></div></div>
 <div class="vp">
  <svg id="cv" width="1867" height="725" viewBox="27 221 1867 725">
   <g id="grid" stroke="#fff" stroke-opacity=".065"></g>
   <path d="M85 245L965 734" stroke="#1f6b2e"/>
   <path d="M1051 739L1892 492" stroke="#6e2a2e"/>
   <g fill="none" stroke="#f4f4f4" stroke-width="1.200">
    <ellipse cx="1002" cy="322" rx="178" ry="72.500"/>
    <ellipse cx="1002" cy="539" rx="60" ry="24.500"/>
    <ellipse cx="1001.500" cy="755.500" rx="177.700" ry="72.500"/>
    <ellipse cx="1001" cy="755" rx="59" ry="24"/>
    <path d="M903 814L1175.500 300M903 814L1171 735"/>
   </g>
   <path d="M965 734L999 757" stroke="#3f9a45" stroke-width="5"/>
   <path d="M1003 757L1051 739" stroke="#c0605d" stroke-width="5"/>
   <path d="M1001 757V701" stroke="#3f7cc4" stroke-width="4.500"/>
   <g fill="none" stroke-width="1.300">
    <path d="M1000 681H1013L1000 695H1013" stroke="#2a7ad0"/>
    <path d="M963 715L969 722L975 715M969 722V731" stroke="#2ca23a"/>
    <path d="M1047 722L1062 737M1062 722L1047 737" stroke="#c8393c"/>
   </g>
   <!-- crosshair -->
   <g stroke-width="1">
    <path d="M1499 633V729" stroke="#3e7fb8"/>
    <path d="M1458 672L1517 708" stroke="#3f8f4a"/>
    <path d="M1557 680L1476 703" stroke="#c4573f"/>
    <rect x="1493.500" y="690" width="11" height="11" fill="#212833" stroke="#fff"/>
   </g>
   <!-- view cube -->
   <ellipse cx="1806" cy="364" rx="58" ry="25" fill="none" stroke="#484e57" stroke-width="15"/>
   <g font-family="Liberation Sans" font-weight="700" fill="#c4c6c9">
    <text font-size="16" transform="translate(1740 383) skewX(-30) scale(1.400 .8)">W</text>
    <text font-size="15" transform="translate(1838 391) scale(1.400 .8)">S</text>
    <text font-size="14" transform="translate(1847 348) scale(1 .75) rotate(5)">E</text>
   </g>
   <path d="M1771.700 308.300L1810 299.300L1840.700 311.700L1801.700 321.700Z" fill="#9a9b9d"/>
   <path d="M1771.700 308.300L1801.700 321.700L1801 371L1773.300 353.300Z" fill="#b6b7b9"/>
   <path d="M1801.700 321.700L1840.700 311.700L1840 357.300L1801 371Z" fill="#aeafb1"/>
   <path d="M1794 318L1808 321V331L1794 331Z" fill="#9ca0a6"/>
   <path d="M1801.500 322V371" stroke="#5a5c60" stroke-dasharray="3 3"/>
   <g font-family="Liberation Sans" font-weight="700" fill="#55585d">
    <text font-size="13" transform="translate(1779 335) skewY(24) scale(.45 1)">LEFT</text>
    <text font-size="15" transform="translate(1807 350) skewY(-14) scale(.53 1)">FRONT</text>
    <text font-size="9" transform="translate(1798 312) skewX(30) skewY(-14) scale(.7 .6)">TOP</text>
   </g>
   <rect x="1777.500" y="423" width="56" height="20" rx="5" fill="#8b8f9a" stroke="#6d7079"/>
   <text x="1782" y="438" font-family="Liberation Sans" font-size="14" fill="#4d5058">WCS</text>
   <path d="M1819 431H1829L1824 437Z" fill="none" stroke="#65686f"/>
  </svg>
  <div class="vlab">[−][Custom View][Realistic]</div>
  <div class="wctl">
   <svg width="10" height="10" viewBox="0 0 10 10"><rect y="7" width="10" height="2.500" fill="#e2e4e8"/></svg>
   <svg width="11" height="11" viewBox="0 0 11 11"><rect x="0.500" y="3" width="7.500" height="7.500" fill="none" stroke="#e2e4e8" stroke-width="1.500"/><path d="M3 2.500V.7H10.300V8H8" fill="none" stroke="#e2e4e8" stroke-width="1.200"/></svg>
   <svg width="11" height="11" viewBox="0 0 11 11"><path d="M1 1L10 10M10 1L1 10" stroke="#e8eaec" stroke-width="2"/></svg>
  </div>
  <div class="hist h1">Specify second point or &lt;use first point as displacement&gt;:  &lt;Ortho on&gt;</div>
  <div class="hist h2">Command:</div>
  <div class="hist h3">Command:</div>
  <div class="cmdh d-flex align-items-center">
   <svg width="6" height="24" viewBox="0 0 6 24"><path d="M1.500 0V24M4.500 0V24" stroke="#b8bcc2" stroke-width="2" stroke-dasharray="2 1.500"/></svg>
   <svg class="g1" width="12" height="12" viewBox="0 0 12 12"><path d="M1 1L11 11M11 1L1 11" stroke="#cfd2d6" stroke-width="2"/></svg>
   <svg class="g5" width="20" height="20" viewBox="0 0 20 20"><path d="M1 19L12 6A5 5 0 0 1 15 0V4H19A5 5 0 0 1 13 8L3 20Z" fill="#cfd2d6"/></svg>
  </div>
  <div class="cmdi d-flex align-items-center">
   <svg width="21" height="20" viewBox="0 0 21 20"><rect x="0.500" y="1.500" width="19" height="17" fill="#b5b6b8" stroke="#55585d"/><rect x="1" y="2" width="18" height="4" fill="#55585d"/><path d="M3 9L6 11L3 13M7 14H10" stroke="#55585d" fill="none"/></svg>
   <span class="cd g3"></span>
   <span class="g9">Type a command</span>
   <span class="cu"></span>
  </div>
 </div>
 <div class="pal pal2"><div class="grip"></div><div class="pal-t2"></div><div class="d-flex justify-content-center"><span class="vert">Properties</span></div></div>
</div>
<div class="strip"></div>

<!-- layout tabs -->
<div class="ltabs d-flex">
 <div class="lact">Model</div>
 <span class="ltxt l1">Layout1</span><span class="sl sl2"></span>
 <span class="ltxt l2">Layout2</span><span class="sl sl2 g4"></span>
 <svg class="g9 mt-2" width="16" height="16" viewBox="0 0 16 16"><path d="M8 0V16M0 8H16" stroke="#e2e4e8" stroke-width="2"/></svg>
 <span class="sl sl2 g13"></span>
</div>

<!-- status bar -->
<div class="sbar d-flex">
 <div class="sleft"></div>
 <div class="sg"><div class="sc mdl">MODEL</div>
  <div class="sc on g3"><svg width="28" height="28" viewBox="0 0 28 28"><path d="M9 4V24M14 4V24M19 4V24M4 9H24M4 14H24M4 19H24" stroke="#fff"/></svg></div>
  <div class="sc g2"><svg width="28" height="28" viewBox="0 0 28 28" fill="#dfe1e4"><rect x="6.500" y="6.500" width="3" height="3"/><rect x="12.500" y="6.500" width="3" height="3"/><rect x="18.500" y="6.500" width="3" height="3"/><rect x="6.500" y="12.500" width="3" height="3"/><rect x="12.500" y="12.500" width="3" height="3"/><rect x="18.500" y="12.500" width="3" height="3"/><rect x="6.500" y="18.500" width="3" height="3"/><rect x="12.500" y="18.500" width="3" height="3"/><rect x="18.500" y="18.500" width="3" height="3"/></svg></div>
  <div class="cc c21"><span class="cd"></span></div>
 </div>
 <div class="sg"><div class="sc g2"><svg width="28" height="28" viewBox="0 0 28 28"><path d="M8 5V13M4 9H12" stroke="#d5d7da"/><rect x="12" y="14" width="13" height="7" fill="#d5d7da"/></svg></div>
  <div class="sc on g2"><svg width="28" height="28" viewBox="0 0 28 28"><path d="M4 3V25H25M9 25V15H15" fill="none" stroke="#fff"/></svg></div>
  <div class="sc g4"><svg width="28" height="28" viewBox="0 0 28 28" fill="none" stroke="#c3c6ca"><circle cx="13" cy="15" r="8"/><path d="M4 24L21 6M13 24V15" /></svg></div>
  <div class="cc c16"><span class="cd"></span></div>
  <div class="sc g5"><svg width="28" height="28" viewBox="0 0 28 28"><path d="M13 3L15 25" stroke="#3fa04a"/><path d="M4 9L24 20" stroke="#c24a3c"/><rect x="12" y="12" width="4" height="4" fill="#2d3542" stroke="#ddd"/></svg></div>
  <div class="cc c18"><span class="cd"></span></div>
 </div>
 <div class="sg me-1 ms-n1"><div class="sc on g1"><svg width="29" height="28" viewBox="0 0 29 28"><path d="M4 24H26M4 24L21 7" fill="none" stroke="#fff" stroke-width="1.300"/></svg></div>
  <div class="sc on g1"><svg width="29" height="28" viewBox="0 0 29 28"><rect x="6.500" y="6.500" width="17" height="18" fill="none" stroke="#fff" stroke-width="1.200"/><rect x="4" y="3" width="5" height="5" fill="#5d90c5" stroke="#fff"/></svg></div>
  <div class="cc c18"><span class="cd"></span></div>
 </div>
 <div class="sg"><div class="sc g2"><svg width="29" height="28" viewBox="0 0 29 28" fill="none" stroke="#c3c6ca"><path d="M7 10H19V22H7ZM7 10L12 5H24V17L19 22M19 10L24 5"/><rect x="5" y="20" width="5" height="5" stroke="#ef9d53"/></svg></div>
  <div class="cc c20"><span class="cd"></span></div>
 </div>
 <div class="sg"><div class="sc on g1"><svg width="30" height="28" viewBox="0 0 30 28"><path d="M13 3L19 24L13 21L7 24Z" fill="#fff"/><text x="18" y="11" font-family="Liberation Sans" font-size="9" fill="#fff">o</text></svg></div>
  <div class="sc g1"><svg width="28" height="28" viewBox="0 0 28 28"><path d="M12 4L18 24L12 21L6 24Z" fill="#d0d2d6"/><path d="M21 3L18 9H21L19 14" stroke="#d0d2d6" fill="none"/></svg></div>
  <div class="sc g2"><svg width="28" height="28" viewBox="0 0 28 28"><path d="M14 4L20 24L14 21L8 24Z" fill="#d0d2d6"/></svg></div>
  <div class="sc g6 small-txt">1:1</div>
  <div class="cc c17"><span class="cd g2"></span></div>
 </div>
 <div class="sg"><div class="sc g2"><svg width="29" height="28" viewBox="0 0 29 28"><circle cx="14" cy="14" r="6.500" fill="none" stroke="#d0d2d6" stroke-width="4"/><path d="M14 3V25M3 14H25M6 6L22 22M22 6L6 22" stroke="#d0d2d6" stroke-width="3" stroke-dasharray="3 16" stroke-dashoffset="0"/></svg></div>
  <div class="cc c19"><span class="cd"></span></div>
 </div>
 <div class="sg"><div class="sc"><svg width="28" height="28" viewBox="0 0 28 28"><path d="M14 4V24M4 14H24" stroke="#d8dadd" stroke-width="2.500"/></svg></div></div>
 <div class="sg"><div class="sc g2"><svg width="28" height="28" viewBox="0 0 28 28" fill="none" stroke="#c3c6ca"><rect x="5" y="4" width="8" height="8"/><circle cx="20" cy="13" r="4"/><path d="M12 16L7 24H17Z"/></svg></div>
  <div class="sc g7"><svg width="28" height="28" viewBox="0 0 28 28"><rect x="4" y="2" width="20" height="15" fill="#5e8fbf"/><path d="M14 2V17M4 8H24" stroke="#fff"/><path d="M8 12H16L18 24H6Z" fill="#e9b955"/><path d="M14 20L18 25L26 14" stroke="#54c25a" stroke-width="2.500" fill="none"/></svg></div>
  <div class="sc g7"><svg width="28" height="28" viewBox="0 0 28 28"><rect x="4" y="3" width="20" height="20" fill="#6f7a8b"/><path d="M5 19L11 8L16 16L21 9" fill="none" stroke="#d8dadd"/><path d="M17 15L24 26H11Z" fill="#e8976a"/></svg></div>
 </div>
 <div class="sg flex-grow-1"><div class="sc g6"><svg width="28" height="28" viewBox="0 0 28 28" fill="none" stroke="#c3c6ca"><rect x="4" y="6" width="20" height="16"/><path d="M8 18L12 14M8 14V18H12M20 10L16 14M20 14V10H16"/></svg></div>
  <div class="sc g2"><svg width="28" height="28" viewBox="0 0 28 28"><path d="M4 7H24M4 14H24M4 21H24" stroke="#e0e2e5" stroke-width="2.500"/></svg></div>
 </div>
</div>
<div class="gapb"></div>

<!-- taskbar -->
<div class="tbk d-flex">
 <svg class="g26 mt-3" width="29" height="29" viewBox="0 0 29 29"><defs><linearGradient id="wg" x1="0" y1="0" x2="1" y2="1"><stop offset="0" stop-color="#6fe3f7"/><stop offset="1" stop-color="#0c8ee0"/></linearGradient></defs><path d="M0 1.500A1.500 1.500 0 0 1 1.500 0H13.700V13.700H0ZM15.300 0H27.500A1.500 1.500 0 0 1 29 1.500V13.700H15.300ZM0 15.300H13.700V29H1.500A1.500 1.500 0 0 1 0 27.500ZM15.300 15.300H29V27.500A1.500 1.500 0 0 1 27.500 29H15.300Z" fill="url(#wg)"/></svg>
 <div class="pill d-flex align-items-center g16">
  <svg width="20" height="20" viewBox="0 0 20 20" fill="none"><circle cx="8.500" cy="8.500" r="7" stroke="#dbd8d7" stroke-width="1.600"/><path d="M13.500 13.500L19 19" stroke="#dbd8d7" stroke-width="2"/></svg>
  <span class="pilltxt">Procurar</span>
  <svg class="ms-auto" width="66" height="39" viewBox="0 0 66 39"><path d="M7 39C7 25 16 9 27 6L27 3L33 5L38 4L36 12C42 20 44 30 44 39Z" fill="#a58a7f"/><circle cx="30" cy="20" r="3" fill="#2d2320"/><circle cx="31" cy="19" r="1" fill="#fff"/><ellipse cx="36" cy="24" rx="3" ry="2" fill="#c8b3a8"/><path d="M40 39C38 30 40 25 45 19C47 27 46 34 43 39ZM46 39C46 30 50 24 61 22C58 31 53 36 46 39ZM50 39C54 36 57 34 62 33C58 37 54 39 50 39Z" fill="#9ec848"/></svg>
 </div>
 <div class="d-flex g3">
  <div class="tk"><svg width="30" height="30" viewBox="0 0 30 30"><rect x="0" y="9" width="22" height="20" rx="1" fill="#5f5c5c"/><rect x="7" y="0" width="22" height="21" rx="1" fill="#e4e4e4"/><rect x="7" y="9" width="15" height="12" fill="#b4b4b4"/></svg></div>
  <div class="tk"><svg width="30" height="30" viewBox="0 0 30 30"><path d="M15 1A14 14 0 0 1 15 27C11 27 6 30 3 29C4 27 3 23 2 20A14 14 0 0 1 15 1Z" fill="#6b64c8"/><rect x="9" y="9" width="10" height="10" rx="2" fill="#fff"/><path d="M20 12L24 10V18L20 16Z" fill="#fff"/></svg></div>
  <div class="tk"><svg width="30" height="30" viewBox="0 0 30 30"><rect width="30" height="30" fill="#000"/><text x="15" y="25" text-anchor="middle" font-family="Liberation Sans" font-weight="700" font-size="26" fill="#c4161c" transform="translate(4 0) scale(.75 1)">N</text></svg></div>
  <div class="tk"><svg width="30" height="30" viewBox="0 0 30 30"><path d="M15 1A13.500 13.500 0 1 1 8 26L2 28L4 21A13.500 13.500 0 0 1 15 1Z" fill="#fff"/><path d="M15 4A10.500 10.500 0 1 1 9 23L5.500 24.500L6.500 20.500A10.500 10.500 0 0 1 15 4Z" fill="#2ec54d"/><path d="M10 9L12.500 8.500L14 12L12.500 14C13.500 16 15 17 16.500 18L18 16L22 18V20C19 22 15 21 12 18C9 15 8 11 10 9Z" fill="#fff"/></svg></div>
  <div class="tk"><svg width="30" height="30" viewBox="0 0 30 30"><circle cx="15" cy="15" r="15" fill="#5865f2"/><path d="M8 9C12 7 18 7 22 9C25 13 25 18 25 21C23 22 21 23 19 23L18 21H12L11 23C9 23 7 22 5 21C5 18 5 13 8 9Z" fill="#fff"/><circle cx="11.500" cy="15.500" r="2.300" fill="#5865f2"/><circle cx="18.500" cy="15.500" r="2.300" fill="#5865f2"/></svg></div>
  <div class="tk"><svg width="30" height="30" viewBox="0 0 30 30"><circle cx="15" cy="16" r="14" fill="#f36a2d"/><path d="M20 1C26 6 30 14 28 20C26 12 22 8 18 7Z" fill="#ffb23e"/><circle cx="15" cy="16" r="7.500" fill="#6a37c9"/><path d="M3 10C6 9 9 10 11 12L6 20Z" fill="#ffcf3f"/></svg><span class="pip"></span></div>
  <div class="tk"><svg width="30" height="30" viewBox="0 0 30 30"><defs><linearGradient id="eg" x1="0" y1="1" x2="1" y2="0"><stop offset="0" stop-color="#0f5fb8"/><stop offset=".6" stop-color="#1fa5d8"/><stop offset="1" stop-color="#4cd98c"/></linearGradient></defs><circle cx="15" cy="15" r="15" fill="url(#eg)"/><path d="M30 17C28 11 22 9 17 11C13 13 13 20 17 23C21 25 25 24 28 22C25 28 19 30 13 29C9 24 10 17 12 14C17 11 25 12 30 17Z" fill="#1a6ec4" fill-opacity=".7"/><ellipse cx="19" cy="18" rx="6" ry="4" fill="#261c1e"/></svg></div>
  <div class="tk"><svg width="30" height="30" viewBox="0 0 30 30"><circle cx="15" cy="15" r="15" fill="#1c50a6"/><path d="M20 2C27 7 30 15 26 24L20 11Z" fill="#3c7dd6"/><path d="M4 14H22V24H4Z" fill="#ecf1f8"/><path d="M4 14L13 20L22 14" fill="none" stroke="#98a9c4"/></svg></div>
  <div class="tk"><svg width="30" height="30" viewBox="0 0 30 30"><path d="M0 1H11L15 5H30V28H0Z" fill="#f3bf3a"/><path d="M0 7H30V28H0Z" fill="#fcd34d"/><rect x="8" y="23" width="14" height="5" fill="#0f7ecb"/><rect x="12" y="19" width="6" height="5" fill="#0f7ecb" fill-opacity=".8"/></svg><span class="pip"></span></div>
  <div class="tk"><svg width="26" height="30" viewBox="0 0 26 30"><path d="M1 1H17L25 9V29H1Z" fill="#f5f5f5" stroke="#888"/><path d="M17 1L25 9H17Z" fill="#777"/></svg></div>
  <div class="tk"><svg width="30" height="30" viewBox="0 0 30 30"><rect x="2" y="1" width="26" height="28" fill="#f0f2f6"/><path d="M2 1H18L4 14H2Z" fill="#5b87c9"/><text x="4" y="15" font-family="Liberation Sans" font-weight="700" font-style="italic" font-size="13" fill="#1b57a6">W</text><text x="17" y="15" font-family="Liberation Sans" font-weight="700" font-style="italic" font-size="13" fill="#1b57a6">E</text><path d="M5 20H25M5 23H25M5 26H25" stroke="#4c7cc0" stroke-width="1.500"/></svg></div>
  <div class="tk"><svg width="30" height="30" viewBox="0 0 30 30"><path d="M2 3L26 1V29L2 26Z" fill="#f4c3ab"/><rect x="7" y="10" width="20" height="16" fill="#e8552a"/><rect x="11" y="14" width="5" height="7" fill="#fff"/><circle cx="21" cy="17" r="4" fill="#fff"/></svg></div>
  <div class="tk"><svg width="30" height="30" viewBox="0 0 30 30"><rect width="30" height="30" fill="#8f0a0a"/><text x="15" y="23" text-anchor="middle" font-family="Liberation Sans" font-weight="700" font-style="italic" font-size="20" fill="#fff">Fz</text></svg></div>
  <div class="tk"><svg width="30" height="30" viewBox="0 0 30 30"><path d="M0 0H17A7 7 0 0 1 24 7V10A5 5 0 0 1 22 14A6 6 0 0 1 24 19V30H0Z" fill="#d8222a"/><rect x="0" y="2" width="8" height="26" fill="#fff"/><path d="M0 6H5M0 10H5M0 14H5M0 18H5M0 22H5" stroke="#111"/><rect x="11" y="6" width="7" height="6" fill="#fff"/><rect x="11" y="18" width="7" height="6" fill="#fff"/><circle cx="24" cy="24" r="6" fill="#1418d0"/></svg></div>
  <div class="tk"><svg width="30" height="30" viewBox="0 0 30 30"><circle cx="15" cy="14" r="10.500" fill="none" stroke="#7fa637" stroke-width="6"/><path d="M15 12L26 26L29 23L18 11Z" fill="#7fa637"/><path d="M11 9L19 16L16 18Z" fill="#f0963c"/></svg></div>
  <div class="tk"><svg width="26" height="30" viewBox="0 0 26 30"><path d="M13 1L25 7V21L13 29L1 21V7Z" fill="#12305c"/><path d="M13 1L25 7L13 13L1 7Z" fill="#e8eaec"/><path d="M13 4L20 7L13 10L6 7Z" fill="#12305c"/><path d="M1 7V21L4 23V10ZM25 7V21L22 23V10Z" fill="#b9c2cf"/></svg></div>
  <div class="tk"><svg width="30" height="30" viewBox="0 0 30 30"><path d="M15 1C24 1 30 7 29 15C28 21 22 20 21 23C20 27 16 29 11 28C4 26 0 21 1 14C2 6 8 1 15 1Z" fill="#28a4ea"/><circle cx="9" cy="9" r="2.500" fill="#f05a4f"/><circle cx="16" cy="6" r="2.500" fill="#f7c84b"/><circle cx="7" cy="17" r="2.500" fill="#56c270"/><rect x="19" y="9" width="3" height="20" fill="#b87a3d"/><path d="M18 1H23L22 10H19Z" fill="#e7e7e7"/></svg><span class="pip"></span></div>
  <div class="tk"><svg width="30" height="30" viewBox="0 0 30 30"><path d="M3 14C8 13 10 9 14 6L22 2L21 8C24 12 22 18 17 19L13 20C9 20 5 18 3 14Z" fill="#5a554f"/><circle cx="9" cy="13" r="3" fill="#ddd"/><circle cx="15" cy="12" r="3" fill="#ddd"/><circle cx="9" cy="13" r="1.200" fill="#222"/><circle cx="15" cy="12" r="1.200" fill="#222"/><path d="M16 20L26 27" stroke="#c6b28b" stroke-width="2"/></svg></div>
  <div class="tk"><svg width="28" height="30" viewBox="0 0 28 30"><path d="M1 6L22 1L27 10L26 26L8 29L5 24Z" fill="#e02a2a"/><path d="M10 9H20V12H14V15H19V18H14V23H10Z" fill="#fff" fill-opacity=".9"/></svg></div>
  <div class="tk"><svg width="30" height="30" viewBox="0 0 30 30"><ellipse cx="15" cy="16" rx="13" ry="14" fill="#6fd43a"/><path d="M6 3C14 0 24 3 27 11C22 5 14 4 8 8Z" fill="#a92a1e"/><path d="M2 16H18" stroke="#e8c828" stroke-width="2"/><circle cx="9" cy="6" r="3" fill="none" stroke="#3b2a1a"/></svg></div>
  <div class="tka"><svg width="29" height="30" viewBox="0 0 29 30"><path d="M2 1H27V21H2Z" fill="#e2124f"/><path d="M2 1H5L2 4Z" fill="#3b3133"/><rect x="2" y="21" width="25" height="9" fill="#7b0d2e"/><text x="14.500" y="16" text-anchor="middle" font-family="Liberation Sans" font-weight="700" font-size="16" fill="#fff">A</text><text x="14.500" y="28" text-anchor="middle" font-family="Liberation Sans" font-weight="700" font-size="7" fill="#f5b8c9">CAD</text></svg><span class="pipa"></span></div>
  <div class="tk"><svg width="27" height="30" viewBox="0 0 27 30"><path d="M0 1H27V21H0Z" fill="#1d6fe0"/><path d="M0 1H3L0 4Z" fill="#261c1e"/><rect y="21" width="27" height="9" fill="#0f3e8c"/><text x="13.500" y="16" text-anchor="middle" font-family="Liberation Sans" font-weight="700" font-size="16" fill="#fff">R</text><text x="13.500" y="28" text-anchor="middle" font-family="Liberation Sans" font-weight="700" font-size="7" fill="#bcd6fa">RVT</text></svg></div>
 </div>
 <div class="d-flex align-items-center ms-auto">
  <svg width="14" height="9" viewBox="0 0 14 9"><path d="M1 8L7 1.500L13 8" fill="none" stroke="#ecebeb" stroke-width="1.500"/></svg>
  <svg class="g23" width="20" height="16" viewBox="0 0 20 16" fill="none" stroke="#ecebeb" stroke-width="1.500"><path d="M1 6A13 13 0 0 1 19 6M4 9A9 9 0 0 1 16 9M7 12A5 5 0 0 1 13 12"/><circle cx="10" cy="14.500" r="1" fill="#ecebeb"/></svg>
  <svg class="g10" width="19" height="16" viewBox="0 0 19 16"><path d="M0.500 5.500H4L9 1.500V14.500L4 10.500H0.500Z" fill="none" stroke="#ecebeb" stroke-width="1.300"/><path d="M12 5A4 4 0 0 1 12 11" fill="none" stroke="#ecebeb" stroke-width="1.200"/><path d="M15 2.500A8 8 0 0 1 15 13.500" fill="none" stroke="#8d8a8a"/></svg>
  <svg class="g12" width="19" height="13" viewBox="0 0 19 13"><rect x=".7" y=".7" width="16" height="11.500" rx="2.500" fill="none" stroke="#ecebeb" stroke-width="1.400"/><rect x="3" y="3" width="7" height="7" rx="1" fill="#ecebeb"/><rect x="17.500" y="4" width="1.500" height="5" fill="#ecebeb"/></svg>
  <div class="clock g3"><div>11:04</div><div>23/03/2023</div></div>
 </div>
</div>
</div>
<script src="https://cdn.jsdelivr.net/npm/bootstrap@5.3.0/dist/js/bootstrap.bundle.min.js"></script>
<script>
(function(){
 var O=[1002,756],X=[4562,-300],Y=[-894,-300],cx=.036,cy=.06,g=document.getElementById('grid'),h='';
 function P(u,v){var w=1+u*cx+v*cy;return[(O[0]+u*cx*X[0]+v*cy*Y[0])/w,(O[1]+u*cx*X[1]+v*cy*Y[1])/w]}
 function ln(a,b){h+='<path d="M'+a[0].toFixed(1)+' '+a[1].toFixed(1)+'L'+b[0].toFixed(1)+' '+b[1].toFixed(1)+'"/>'}
 for(var i=-30;i<=110;i++){
  ln(P(i,(.03-1-i*cx)/cy),P(i,1e5));
  ln(P((.03-1-i*cy)/cx,i),P(1e5,i));
 }
 g.innerHTML=h;
})();
</script>
</body></html>
